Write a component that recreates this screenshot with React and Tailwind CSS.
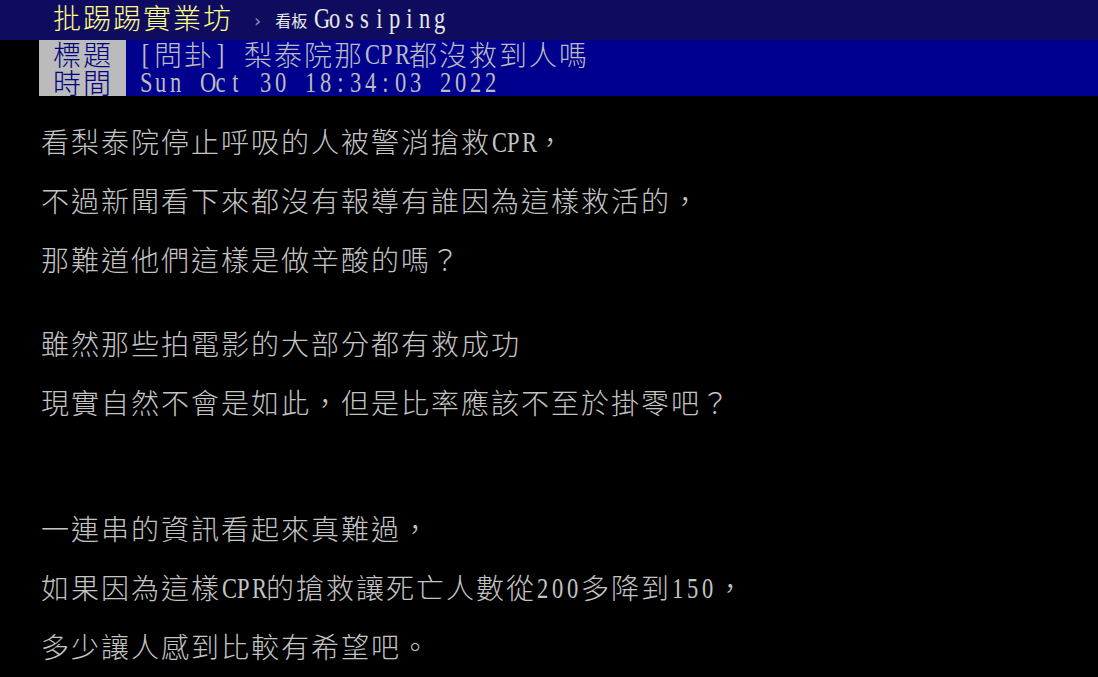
import React from 'react';

const CJK = '"Noto Sans CJK TC", "Noto Sans CJK JP", sans-serif';

// terminal-style grid: half-width glyphs take 15px, full-width glyphs 30px
function isHalf(ch) {
  const c = ch.codePointAt(0);
  return c < 0x2e80;
}

function Cells({ text }) {
  return (
    <span className="inline-flex whitespace-pre">
      {Array.from(text).map((ch, i) =>
        isHalf(ch) ? (
          <span
            key={i}
            className="inline-block w-[15px] text-center scale-x-75 text-[30px]"
            style={{ fontFamily: '"Liberation Serif", serif' }}
          >
            {ch}
          </span>
        ) : (
          <span
            key={i}
            className="inline-block w-[30px] text-center text-[28px] font-light"
            style={{ fontFamily: CJK }}
          >
            {ch}
          </span>
        )
      )}
    </span>
  );
}

function MetaRow({ label, value }) {
  return (
    <div className="flex h-[28px] items-center overflow-visible">
      <div className="flex h-full w-[87px] items-center bg-[#bbbbbb] pl-[13px] leading-[28px] text-[#000080]">
        <Cells text={label} />
      </div>
      <div className="flex h-full flex-1 items-center bg-[#00008f] pl-[12px] leading-[28px] text-[#bcbcbc]">
        <Cells text={value} />
      </div>
    </div>
  );
}

const body = [
  { text: '看梨泰院停止呼吸的人被警消搶救CPR，' },
  { text: '不過新聞看下來都沒有報導有誰因為這樣救活的，' },
  { text: '那難道他們這樣是做辛酸的嗎？' },
  { gap: 'h-[25px]' },
  { text: '雖然那些拍電影的大部分都有救成功' },
  { text: '現實自然不會是如此，但是比率應該不至於掛零吧？' },
  { gap: 'h-[67px]' },
  { text: '一連串的資訊看起來真難過，' },
  { text: '如果因為這樣CPR的搶救讓死亡人數從200多降到150，' },
  { text: '多少讓人感到比較有希望吧。' },
];

export default function App() {
  return (
    <div className="w-[1098px] h-[677px] overflow-hidden bg-black">
      {/* top bar */}
      <div className="flex h-[40px] items-center bg-[#0f0c60] pl-[52px]">
        <span className="leading-[34px] text-[#ffff80]">
          <Cells text="批踢踢實業坊" />
        </span>
        <span className="ml-[22px] text-[18px] text-[#9090b8]" style={{ fontFamily: '"DejaVu Sans", sans-serif' }}>
          ›
        </span>
        <span className="ml-[14px] text-[16px] text-[#e8e8e8]" style={{ fontFamily: CJK }}>
          看板
        </span>
        <span className="ml-[5px] leading-[34px] text-[#e8e8e8]">
          <Cells text="Gossiping" />
        </span>
      </div>

      {/* article meta */}
      <div className="ml-[39px]">
        <MetaRow label="標題" value="[問卦] 梨泰院那CPR都沒救到人嗎" />
        <MetaRow label="時間" value="Sun Oct 30 18:34:03 2022" />
      </div>

      {/* article body */}
      <div className="pl-[40px] pt-[16px] text-[#c4c4c4]">
        {body.map((line, i) =>
          line.gap ? (
            <div key={i} className={line.gap} />
          ) : (
            <div key={i} className="h-[59px] leading-[59px]">
              <Cells text={line.text} />
            </div>
          )
        )}
      </div>
    </div>
  );
}
